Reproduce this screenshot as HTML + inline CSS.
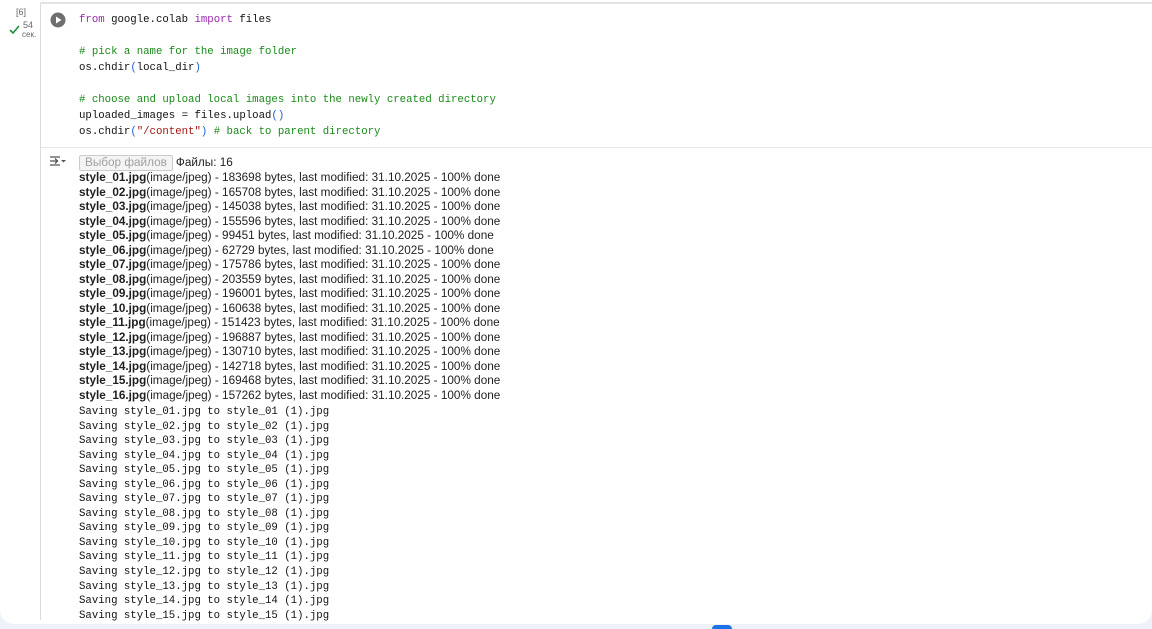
<!DOCTYPE html>
<html><head><meta charset="utf-8"><style>
html,body{margin:0;padding:0}
body{width:1152px;height:629px;background:#eef2f8;position:relative;overflow:hidden;font-family:"Liberation Sans",Arial,sans-serif}
.panel{position:absolute;left:0;top:0;width:1152px;height:624px;background:#fff;border-radius:0 0 14px 14px}
.topline{position:absolute;left:40px;right:0;top:2px;height:2px;background:#e3e3e3;border-top-left-radius:6px}
.vline{position:absolute;left:40px;top:3px;width:1px;height:617px;background:#dcdcdc}
.hline{position:absolute;left:41px;right:0;top:147px;height:1px;background:#e6e6e6}
.mono{font-family:"Liberation Mono",monospace;font-size:10.7px;color:#111;white-space:pre}
.code{position:absolute;left:79px;top:12px;line-height:16px}
.kw{color:#9c27b0}.cm{color:#1a8a1a}.br{color:#1a5fd1}.st{color:#a31515}
.out{position:absolute;left:79px;top:155px;font-size:11.75px;color:#1f1f1f;line-height:14.5px;white-space:nowrap}
.out b{font-weight:bold}
.btn{display:inline-block;border:1px solid #ccc;background:#f4f4f4;color:#a0a0a0;padding:0 5px;height:14px;line-height:14px;border-radius:2px;margin-right:3px}
.sv{line-height:14.55px;margin-top:2px}
.gut{position:absolute;font-size:9px;color:#666}
</style></head><body>
<div class="panel"></div>
<div class="topline"></div><div class="vline"></div><div class="hline"></div>
<div class="gut" style="left:16px;top:7px">[6]</div>
<div class="gut" style="left:23px;top:20px">54</div>
<div class="gut" style="left:22px;top:30px;font-size:8px">сек.</div>
<svg style="position:absolute;left:9px;top:25px" width="12" height="10"><path d="M1 5l3 3 6-7" stroke="#1e8e3e" stroke-width="1.6" fill="none"/></svg>
<svg style="position:absolute;left:50px;top:12px" width="16" height="16"><circle cx="8" cy="8" r="7.5" fill="#6f6f6f"/><path d="M6 4.5v7l5.5-3.5z" fill="#fff"/></svg>
<svg style="position:absolute;left:49px;top:155px" width="18" height="12"><path d="M1 2h10M1 10h10M1 6h8M6 3.5l2.5 2.5L6 8.5" stroke="#555" stroke-width="1.3" fill="none"/><path d="M12 5h5l-2.5 2.5z" fill="#555"/></svg>
<div class="mono code"><span class="kw">from</span> google.colab <span class="kw">import</span> files

<span class="cm"># pick a name for the image folder</span>
os.chdir<span class="br">(</span>local_dir<span class="br">)</span>

<span class="cm"># choose and upload local images into the newly created directory</span>
uploaded_images = files.upload<span class="br">()</span>
os.chdir<span class="br">(</span><span class="st">"/content"</span><span class="br">)</span> <span class="cm"># back to parent directory</span></div>
<div class="out">
<div><span class="btn">Выбор файлов</span>Файлы: 16</div>
<div><b>style_01.jpg</b>(image/jpeg) - 183698 bytes, last modified: 31.10.2025 - 100% done</div>
<div><b>style_02.jpg</b>(image/jpeg) - 165708 bytes, last modified: 31.10.2025 - 100% done</div>
<div><b>style_03.jpg</b>(image/jpeg) - 145038 bytes, last modified: 31.10.2025 - 100% done</div>
<div><b>style_04.jpg</b>(image/jpeg) - 155596 bytes, last modified: 31.10.2025 - 100% done</div>
<div><b>style_05.jpg</b>(image/jpeg) - 99451 bytes, last modified: 31.10.2025 - 100% done</div>
<div><b>style_06.jpg</b>(image/jpeg) - 62729 bytes, last modified: 31.10.2025 - 100% done</div>
<div><b>style_07.jpg</b>(image/jpeg) - 175786 bytes, last modified: 31.10.2025 - 100% done</div>
<div><b>style_08.jpg</b>(image/jpeg) - 203559 bytes, last modified: 31.10.2025 - 100% done</div>
<div><b>style_09.jpg</b>(image/jpeg) - 196001 bytes, last modified: 31.10.2025 - 100% done</div>
<div><b>style_10.jpg</b>(image/jpeg) - 160638 bytes, last modified: 31.10.2025 - 100% done</div>
<div><b>style_11.jpg</b>(image/jpeg) - 151423 bytes, last modified: 31.10.2025 - 100% done</div>
<div><b>style_12.jpg</b>(image/jpeg) - 196887 bytes, last modified: 31.10.2025 - 100% done</div>
<div><b>style_13.jpg</b>(image/jpeg) - 130710 bytes, last modified: 31.10.2025 - 100% done</div>
<div><b>style_14.jpg</b>(image/jpeg) - 142718 bytes, last modified: 31.10.2025 - 100% done</div>
<div><b>style_15.jpg</b>(image/jpeg) - 169468 bytes, last modified: 31.10.2025 - 100% done</div>
<div><b>style_16.jpg</b>(image/jpeg) - 157262 bytes, last modified: 31.10.2025 - 100% done</div>
<div class="mono sv">Saving style_01.jpg to style_01 (1).jpg
Saving style_02.jpg to style_02 (1).jpg
Saving style_03.jpg to style_03 (1).jpg
Saving style_04.jpg to style_04 (1).jpg
Saving style_05.jpg to style_05 (1).jpg
Saving style_06.jpg to style_06 (1).jpg
Saving style_07.jpg to style_07 (1).jpg
Saving style_08.jpg to style_08 (1).jpg
Saving style_09.jpg to style_09 (1).jpg
Saving style_10.jpg to style_10 (1).jpg
Saving style_11.jpg to style_11 (1).jpg
Saving style_12.jpg to style_12 (1).jpg
Saving style_13.jpg to style_13 (1).jpg
Saving style_14.jpg to style_14 (1).jpg
Saving style_15.jpg to style_15 (1).jpg</div>
</div>
<div style="position:absolute;left:712px;top:625px;width:20px;height:4px;border-radius:10px 10px 0 0;background:#1a73e8"></div>
</body></html>
